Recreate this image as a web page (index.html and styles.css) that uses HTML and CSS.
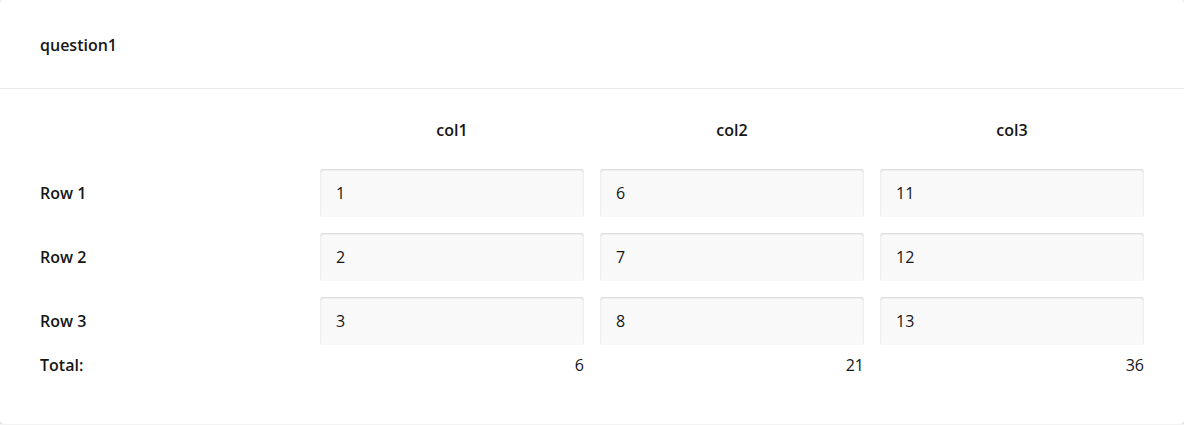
FILE: index.html
```html
<!DOCTYPE html>
<html>
<head>
<meta charset="utf-8">
<link rel="stylesheet" href="styles.css">
</head>
<body>
<div class="card">
  <div class="card-header"><span class="title">question1</span></div>
  <div class="matrix">
    <div class="head-cell"></div>
    <div class="head-cell">col1</div>
    <div class="head-cell">col2</div>
    <div class="head-cell">col3</div>

    <div class="row-label">Row 1</div>
    <div class="cell"><div class="input">1</div></div>
    <div class="cell"><div class="input">6</div></div>
    <div class="cell"><div class="input">11</div></div>

    <div class="row-label">Row 2</div>
    <div class="cell"><div class="input">2</div></div>
    <div class="cell"><div class="input">7</div></div>
    <div class="cell"><div class="input">12</div></div>

    <div class="row-label">Row 3</div>
    <div class="cell"><div class="input">3</div></div>
    <div class="cell"><div class="input">8</div></div>
    <div class="cell"><div class="input">13</div></div>

    <div class="total-label">Total:</div>
    <div class="total">6</div>
    <div class="total">21</div>
    <div class="total">36</div>
  </div>
</div>
</body>
</html>
```

FILE: styles.css
```css
html, body {
  margin: 0;
  padding: 0;
  background: #f3f3f3;
}
body {
  font-family: "Open Sans", "Liberation Sans", sans-serif;
  font-size: 16px;
  line-height: 24px;
  color: #161616;
}
.card {
  width: 1184px;
  height: 424px;
  background: #ffffff;
  border-radius: 4px;
  box-shadow: 0 1px 2px rgba(0, 0, 0, 0.15);
  box-sizing: border-box;
}
.card-header {
  height: 89px;
  box-sizing: border-box;
  padding: 33px 40px 0 40px;
  border-bottom: 1px solid #e8e8e8;
}
.title {
  font-weight: 600;
}
.matrix {
  display: grid;
  grid-template-columns: repeat(4, 264px);
  column-gap: 16px;
  padding: 0 40px;
}
.head-cell {
  font-weight: 600;
  text-align: center;
  padding: 29px 0 19px 0;
}
.row-label, .total-label {
  font-weight: 600;
  display: flex;
  align-items: center;
}
.cell {
  padding: 8px 0;
}
.input {
  height: 48px;
  box-sizing: border-box;
  padding: 12px 16px;
  background: #f9f9f9;
  border-radius: 4px;
  box-shadow: inset 0 1px 2px rgba(0, 0, 0, 0.15);
}
.total {
  text-align: right;
}
```
